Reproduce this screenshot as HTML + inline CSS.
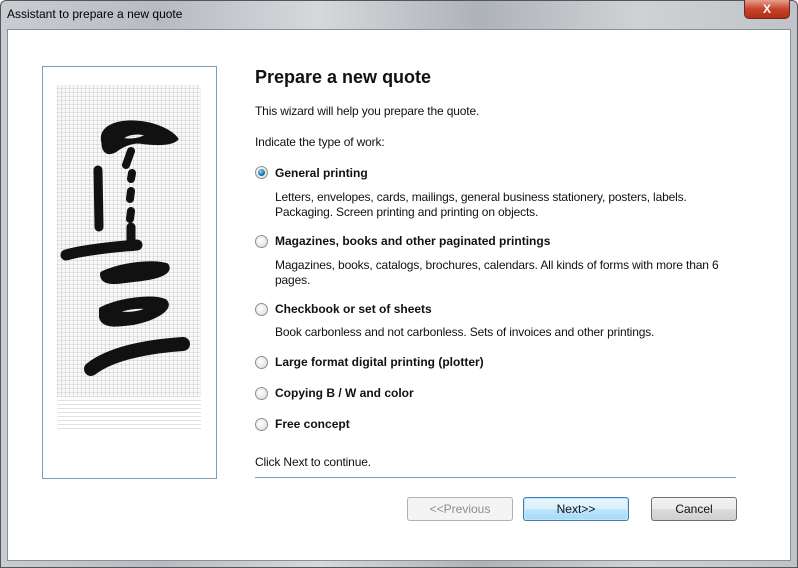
<!DOCTYPE html>
<html><head><meta charset="utf-8"><style>
*{margin:0;padding:0;box-sizing:border-box}
body{width:798px;height:568px;overflow:hidden;font-family:"Liberation Sans",sans-serif;font-size:12px;color:#111;background:#fff;position:relative}
.frame{position:absolute;left:0;top:0;width:798px;height:568px;background:linear-gradient(90deg,#c9cdd2 0%,#b7bcc2 20%,#d6d8db 40%,#aeb3b8 60%,#cfd2d5 80%,#bfc3c7 100%);border:1px solid #555;border-radius:6px 6px 0 0}
.title{position:absolute;left:7px;top:7px;font-size:12px;color:#000}
.close{position:absolute;left:744px;top:0;width:46px;height:19px;background:linear-gradient(#e8a08e,#c7432a 50%,#b32e17);border:1px solid #6b2a20;border-top:none;border-radius:0 0 5px 5px;color:#fff;font-weight:bold;text-align:center;font-size:12px;line-height:18px}
.client{position:absolute;left:7px;top:29px;width:784px;height:532px;background:#fff;border:1px solid #8a8f95}
.a{position:absolute;white-space:nowrap;letter-spacing:-0.15px}
.pic{position:absolute;left:42px;top:66px;width:175px;height:413px;border:1px solid #7a9cc0;background:#fff}
.tex{position:absolute;left:14px;top:18px;width:144px;height:312px;background:
repeating-linear-gradient(90deg,rgba(0,0,0,.09) 0 1px,transparent 1px 4px),
repeating-linear-gradient(0deg,rgba(0,0,0,.08) 0 1px,transparent 1px 4px),#f8f8f8}
.lines{position:absolute;left:14px;top:330px;width:144px;height:32px;background:repeating-linear-gradient(0deg,#e3e3e3 0 1px,transparent 1px 4px)}
.b{font-weight:bold;letter-spacing:0}
.r{position:absolute;width:13px;height:13px;border-radius:50%;border:1px solid #8e8f8f;background:radial-gradient(circle at 40% 40%,#fff,#d8d8d8)}
.r.on::after{content:"";position:absolute;left:2px;top:2px;width:7px;height:7px;border-radius:50%;background:radial-gradient(circle at 40% 35%,#8fd3ff,#1a6fa8 60%,#0b3c66)}
.btn{position:absolute;top:497px;width:106px;height:24px;border:1px solid #707070;border-radius:3px;background:linear-gradient(#f2f2f2,#ebebeb 50%,#dddddd 51%,#cfcfcf);text-align:center;line-height:22px;font-size:12px}
</style></head><body>
<div class="frame"></div>
<div class="title">Assistant to prepare a new quote</div>
<div class="close">X</div>
<div class="client"></div>
<div class="pic"><div class="tex"></div><div class="lines"></div>
<svg style="position:absolute;left:0;top:0" width="175" height="413" viewBox="0 0 175 413">
<g fill="#111" stroke="#111" stroke-linecap="round" stroke-linejoin="round">
<path d="M60 76 C56 62 70 54 92 55 C112 56 128 64 134 72 C128 78 110 77 96 75 C88 75 80 78 72 84 C64 88 60 84 60 76Z M78 72 C84 65 98 65 104 68 C98 73 86 74 78 72Z" fill-rule="evenodd" stroke-width="3"/>
<path d="M88 84 L83 98" stroke-width="8" fill="none"/>
<path d="M55 103 L56 160" stroke-width="9" fill="none"/>
<path d="M89 106 L88 112 M88 124 L87 132 M88 144 L87 152" stroke-width="8" fill="none"/>
<path d="M88 160 L88 174" stroke-width="9" fill="none"/>
<path d="M23 188 C40 183 70 180 94 178" stroke-width="11" fill="none"/>
<path d="M60 207 C80 198 110 195 123 199 C127 206 110 210 90 212 C75 214 60 217 60 207Z" stroke-width="6"/>
<path d="M58 242 C78 232 110 229 122 234 C130 242 110 252 90 256 C75 258 60 260 58 250Z M72 245 C85 239 102 239 106 241 C100 246 84 249 72 245Z" fill-rule="evenodd" stroke-width="4"/>
<path d="M48 302 C70 285 110 279 140 277" stroke-width="14" fill="none"/>
</g></svg></div>
<div class="a b" style="left:255px;top:67px;font-size:18px">Prepare a new quote</div>
<div class="a" style="left:255px;top:104px">This wizard will help you prepare the quote.</div>
<div class="a" style="left:255px;top:135px">Indicate the type of work:</div>
<div class="r on" style="left:255px;top:166px"></div>
<div class="a b" style="left:275px;top:166px">General printing</div>
<div class="a" style="left:275px;top:190px;line-height:15px">Letters, envelopes, cards, mailings, general business stationery, posters, labels.<br>Packaging. Screen printing and printing on objects.</div>
<div class="r" style="left:255px;top:235px"></div>
<div class="a b" style="left:275px;top:234px">Magazines, books and other paginated printings</div>
<div class="a" style="left:275px;top:258px;line-height:15px">Magazines, books, catalogs, brochures, calendars. All kinds of forms with more than 6<br>pages.</div>
<div class="r" style="left:255px;top:303px"></div>
<div class="a b" style="left:275px;top:302px">Checkbook or set of sheets</div>
<div class="a" style="left:275px;top:325px">Book carbonless and not carbonless. Sets of invoices and other printings.</div>
<div class="r" style="left:255px;top:356px"></div>
<div class="a b" style="left:275px;top:355px">Large format digital printing (plotter)</div>
<div class="r" style="left:255px;top:387px"></div>
<div class="a b" style="left:275px;top:386px">Copying B / W and color</div>
<div class="r" style="left:255px;top:418px"></div>
<div class="a b" style="left:275px;top:417px">Free concept</div>
<div class="a" style="left:255px;top:455px">Click Next to continue.</div>
<div style="position:absolute;left:255px;top:477px;width:481px;height:1px;background:#7a9cc0"></div>
<div class="btn" style="left:407px;border-color:#adb2b5;background:#f4f4f4;color:#8d8d8d">&lt;&lt;Previous</div>
<div class="btn" style="left:523px;border-color:#3c7fb1;background:linear-gradient(#eaf6fd,#d9f0fc 50%,#bee6fd 51%,#a7d9f5);box-shadow:inset 0 0 0 1px #bfe6fb">Next&gt;&gt;</div>
<div class="btn" style="left:651px;width:86px">Cancel</div>
</body></html>
